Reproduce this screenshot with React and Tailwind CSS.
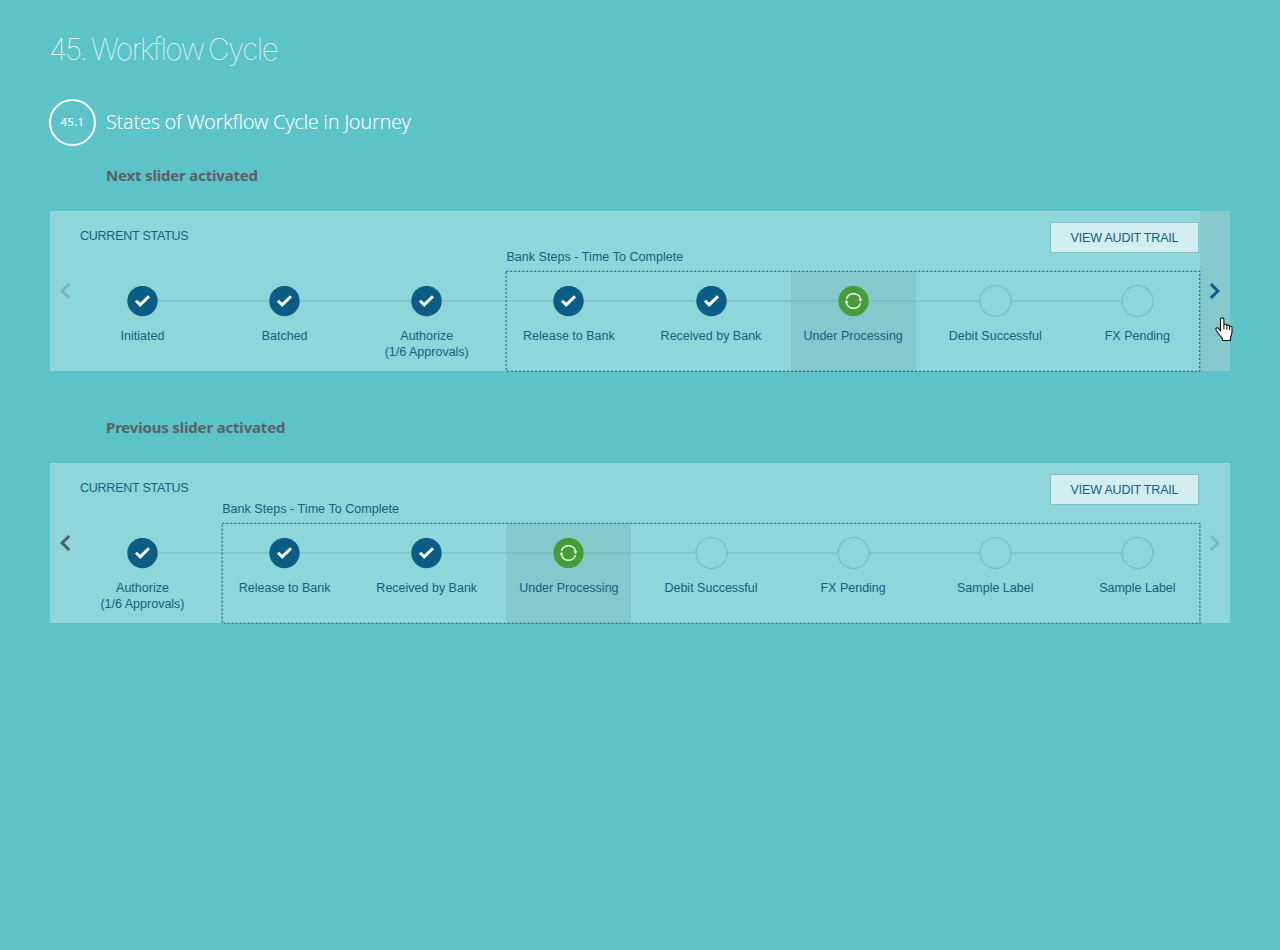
function Check() {
  return (
    <svg width="31" height="31" viewBox="0 0 31 31" className="block">
      <circle cx="15.5" cy="15" r="15.2" fill="#0a5d85" />
      <path d="M9 14.800l4.200 4.100L22 10.200" fill="none" stroke="#fff" strokeWidth="3" />
    </svg>
  );
}

function Processing() {
  return (
    <svg width="31" height="31" viewBox="0 0 31 31" className="block">
      <circle cx="15.5" cy="15" r="15.1" fill="#449d37" />
      <g fill="none" stroke="#f3fbf0" strokeWidth="1.600">
        <path d="M8.500 12.800a7.300 7.300 0 0 1 14.200 1.200" />
        <path d="M22.500 17.200a7.300 7.300 0 0 1-14.200-1.200" />
      </g>
      <path d="M20.400 13.300h4l-1.800 2.900zM6.600 16.700h4l-2.200-2.900z" fill="#f3fbf0" />
    </svg>
  );
}

function Pending() {
  return (
    <svg width="33" height="33" viewBox="0 0 33 33" className="-m-px block">
      <circle cx="16.5" cy="16" r="15.500" fill="none" stroke="#7abac0" strokeWidth="1.100" />
    </svg>
  );
}

function Step({ step, last }) {
  const active = step.state === "active";
  return (
    <li className={`relative flex h-[100px] w-[125px] shrink-0 flex-col items-center pt-[15px] ${active ? "bg-[#85c9cd]" : ""}`}>
      {step.state === "done" && <Check />}
      {active && <Processing />}
      {step.state === "pending" && <Pending />}
      {!last && <span className="absolute top-[29px] left-[78px] z-10 h-0.5 w-[111px] bg-[#6aa8ae]/30" />}
      <span className="mt-[11px] text-center text-[12.5px] leading-4 whitespace-nowrap">
        {step.label}
        {step.note && <><br />{step.note}</>}
      </span>
    </li>
  );
}

function Chevron({ left, color }) {
  return (
    <svg width="12" height="18" viewBox="0 0 12 18" className={left ? "rotate-180" : ""}>
      <path d="M1.800 2L8.900 9l-7.100 7" fill="none" stroke={color} strokeWidth="3" />
    </svg>
  );
}

function Hand() {
  return (
    <svg width="18" height="25" viewBox="0 0 18 25" className="absolute top-[106px] left-[15px] z-20">
      <path d="M5.500 14V2.600a1.700 1.700 0 0 1 3.400 0V8c.4-1 2.700-1 3 .6.700-.9 2.500-.6 2.700.9.900-.7 2.400-.1 2.400 1.300V15.600c0 2-1.500 3.500-1.500 5.200v2.700H7.500v-1.800L3.700 17 1 12.800c-.8-1.700 1.200-2.700 2.400-1.500z" fill="#fff" stroke="#111" strokeWidth="1.100" strokeLinejoin="round" />
      <path d="M8.900 8v4.500M11.900 8.800v3.900M14.600 9.700v3.500" stroke="#111" strokeWidth="1" />
    </svg>
  );
}

function Workflow({ title, before, bank, direction }) {
  const next = direction === "next";
  return (
    <section>
      <h3 className="ml-14 h-[22px] font-['Noto_Sans'] text-[15px] leading-5 font-bold whitespace-nowrap text-[#5b6064]">
        <span className="tracking-[-0.18px]">{title}</span>
      </h3>
      <div className="mt-6 flex h-[160px] bg-[#8ed6d9] text-[#13607f]">
        <button className="flex w-[30px] justify-center pt-[71px]"><Chevron left color={next ? "#7fb6b9" : "#555f63"} /></button>
        <div className="w-[1120px]">
          <div className="flex h-[42px] items-start justify-between">
            <h4 className="pt-[17px] text-[12.5px] leading-4 tracking-[-0.24px] whitespace-nowrap">CURRENT STATUS</h4>
            <button className="mt-[11px] mr-px h-[31px] w-[149px] border border-[#84bec4] bg-[#d2eef0] pt-0.5 text-[12.5px] tracking-[-0.18px] whitespace-nowrap">VIEW AUDIT TRAIL</button>
          </div>
          <div className="flex items-end gap-[17.14px]">
            <ol className="flex gap-[17.14px]">
              {before.map((s, i) => <Step key={i} step={s} />)}
            </ol>
            <div>
              <h5 className="h-[18px] text-[12.5px] leading-[9px] tracking-[0.05px] whitespace-nowrap">Bank Steps - Time To Complete</h5>
              <div className="relative">
                <ol className="flex gap-[17.14px]">
                  {bank.map((s, i) => <Step key={i} step={s} last={i === bank.length - 1} />)}
                </ol>
                <svg className="pointer-events-none absolute top-0 left-0 z-10 h-full w-full overflow-visible">
                  <rect x="0.200" y="0.300" width="100%" height="100%" fill="none" stroke="#27768f" strokeWidth="1.300" strokeDasharray="2.200 1.800" />
                </svg>
              </div>
            </div>
          </div>
        </div>
        <button className={`relative flex w-[30px] justify-center pt-[71px] ${next ? "bg-[#85c9cd]" : ""}`}>
          <Chevron color={next ? "#0a5d85" : "#7fb6b9"} />
          {next && <Hand />}
        </button>
      </div>
    </section>
  );
}

const done = (label, note) => ({ label, note, state: "done" });
const pending = (label) => ({ label, state: "pending" });
const processing = { label: "Under Processing", state: "active" };

export default function App() {
  return (
    <main className="h-[950px] w-[1280px] overflow-hidden bg-[#5cc3c8] px-[50px] pt-[29px] font-['Liberation_Sans',sans-serif]">
      <h1 className="h-10 font-['Inter'] text-[30px] leading-10 font-[100] whitespace-nowrap text-white">
        <span className="-ml-px tracking-[-1.5px] [word-spacing:-2.500px]">45. Workflow Cycle</span>
      </h1>
      <div className="mt-[29px] -ml-px flex h-12 items-center">
        <span className="flex size-[47px] items-center justify-center rounded-full border-2 border-white font-['Noto_Sans'] text-[11px] font-medium tracking-[0.4px] text-white">45.1</span>
        <h2 className="ml-[10px] font-['Noto_Sans'] text-[20px] leading-7 font-light whitespace-nowrap text-white">
          <span className="tracking-[-0.33px]">States of Workflow Cycle in Journey</span>
        </h2>
      </div>
      <div className="mt-[19px] flex flex-col gap-[46px]">
        <Workflow
          title="Next slider activated"
          direction="next"
          before={[done("Initiated"), done("Batched"), done("Authorize", "(1/6 Approvals)")]}
          bank={[done("Release to Bank"), done("Received by Bank"), processing, pending("Debit Successful"), pending("FX Pending")]}
        />
        <Workflow
          title="Previous slider activated"
          direction="previous"
          before={[done("Authorize", "(1/6 Approvals)")]}
          bank={[done("Release to Bank"), done("Received by Bank"), processing, pending("Debit Successful"), pending("FX Pending"), pending("Sample Label"), pending("Sample Label")]}
        />
      </div>
    </main>
  );
}
